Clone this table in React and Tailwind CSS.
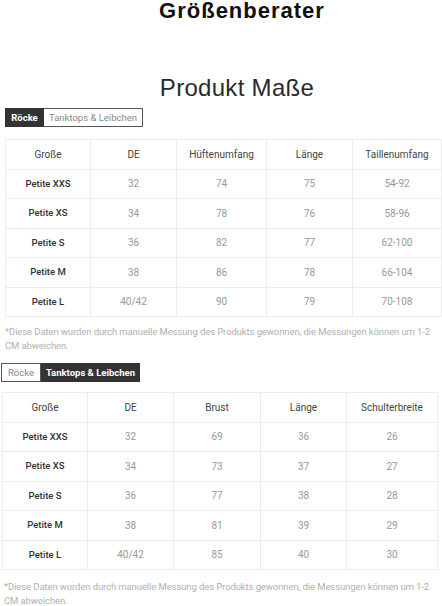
import React from "react";

const rocke = {
  head: ["Große", "DE", "Hüftenumfang", "Länge", "Taillenumfang"],
  widths: ["w-[85px]", "w-[86px]", "w-[90px]", "w-[86px]", "w-[89px]"],
  rows: [
    ["Petite XXS", "32", "74", "75", "54-92"],
    ["Petite XS", "34", "78", "76", "58-96"],
    ["Petite S", "36", "82", "77", "62-100"],
    ["Petite M", "38", "86", "78", "66-104"],
    ["Petite L", "40/42", "90", "79", "70-108"],
  ],
};

const tanktops = {
  head: ["Große", "DE", "Brust", "Länge", "Schulterbreite"],
  widths: ["w-[85px]", "w-[86px]", "w-[87px]", "w-[86px]", "w-[91px]"],
  rows: [
    ["Petite XXS", "32", "69", "36", "26"],
    ["Petite XS", "34", "73", "37", "27"],
    ["Petite S", "36", "77", "38", "28"],
    ["Petite M", "38", "81", "39", "29"],
    ["Petite L", "40/42", "85", "40", "30"],
  ],
};

const Tabs = ({ active }) => (
  <div className="flex h-[19px] text-[9.5px] leading-[17px]">
    <div
      className={
        active === 0
          ? "w-[39px] bg-[#333] text-white font-bold text-center border border-[#333]"
          : "w-[40px] bg-white text-[#888] text-center border border-[#555]"
      }
    >
      Röcke
    </div>
    <div
      className={
        active === 1
          ? "w-[99px] bg-[#333] text-white font-bold text-center border border-[#333]"
          : "w-[99px] bg-white text-[#888] text-center border border-[#555] border-l-0"
      }
    >
      Tanktops &amp; Leibchen
    </div>
  </div>
);

const SizeTable = ({ data }) => (
  <table className="table-fixed border-collapse text-[10px]">
    <thead>
      <tr className="h-[29.5px]">
        {data.head.map((h, i) => (
          <th
            key={h}
            className={`${data.widths[i]} border border-[#ececec] font-normal text-[#444] text-center p-0`}
          >
            {h}
          </th>
        ))}
      </tr>
    </thead>
    <tbody>
      {data.rows.map((row) => (
        <tr key={row[0]} className="h-[29.5px]">
          {row.map((c, i) => (
            <td
              key={i}
              className={
                i === 0
                  ? "border border-[#ececec] text-center text-[#333] text-[9.5px] font-medium p-0"
                  : "border border-[#ececec] text-center text-[#999] p-0"
              }
            >
              {c}
            </td>
          ))}
        </tr>
      ))}
    </tbody>
  </table>
);

const Note = () => (
  <p className="text-[9.5px] tracking-[-0.1px] leading-[14px] text-[#b0b0b0] pr-[4px]">
    *Diese Daten wurden durch manuelle Messung des Produkts gewonnen, die Messungen können um 1-2 CM abweichen.
  </p>
);

export default function App() {
  return (
    <div className="w-[442px] bg-white font-['Roboto',sans-serif] overflow-hidden">
      {/* Headings */}
      <h1 className="h-[22px] text-center font-['Liberation_Sans',Arial,sans-serif] font-bold text-[22px] leading-[22px] tracking-[1px] text-[#111] pl-[42px]">
        Größenberater
      </h1>
      <h2 className="mt-[55px] h-[22px] text-center font-['Liberation_Sans',Arial,sans-serif] text-[24px] leading-[22px] tracking-[0.3px] text-[#2a2a2a] pl-[32px]">
        Produkt Maße
      </h2>

      {/* Röcke */}
      <div className="pl-[5px] mt-[9px]">
        <Tabs active={0} />
        <div className="mt-[12px]">
          <SizeTable data={rocke} />
        </div>
        <div className="mt-[8px]">
          <Note />
        </div>
      </div>

      {/* Tanktops */}
      <div className="pl-[1px] mt-[10px]">
        <Tabs active={1} />
        <div className="mt-[10px] pl-[1px]">
          <SizeTable data={tanktops} />
        </div>
        <div className="mt-[10px] pl-[3px]">
          <Note />
        </div>
      </div>
    </div>
  );
}
